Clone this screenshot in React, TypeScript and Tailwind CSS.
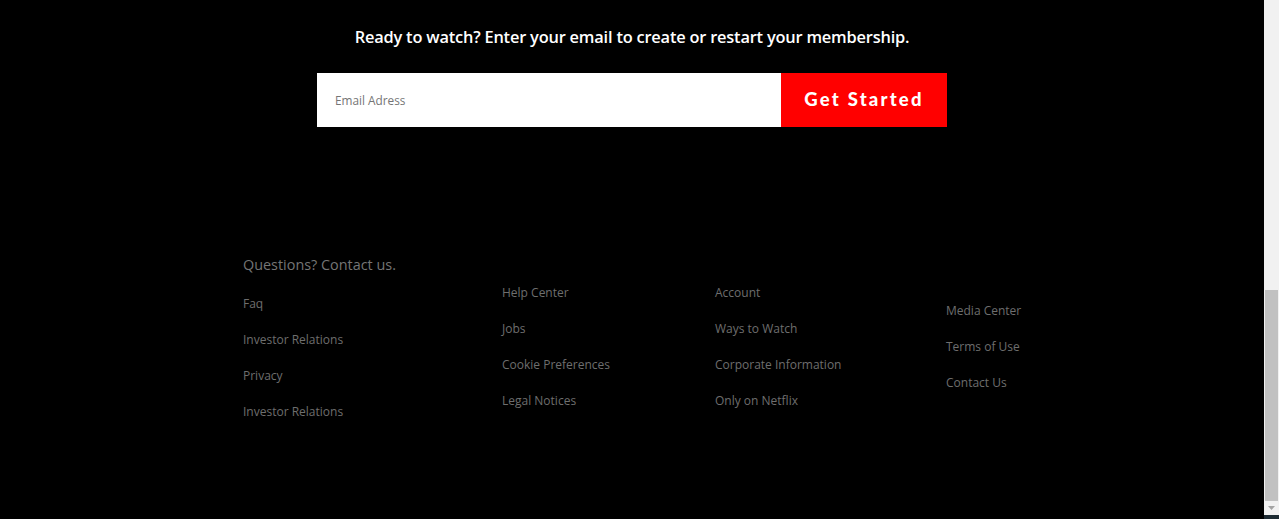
const columns = [
  { offset: "pt-[157px]", items: ["Help Center", "Jobs", "Cookie Preferences", "Legal Notices"] },
  { offset: "pt-[157px]", items: ["Account", "Ways to Watch", "Corporate Information", "Only on Netflix"] },
  { offset: "pt-[175px]", items: ["Media Center", "Terms of Use", "Contact Us"] },
];

function FooterLinks({ items }: { items: string[] }) {
  return (
    <ul className="flex flex-col gap-[18px]">
      {items.map((item, i) => (
        <li key={item + i} className="text-[12px] leading-[18px] text-[#6e6e6e]">
          <a href="#">{item}</a>
        </li>
      ))}
    </ul>
  );
}

function Scrollbar() {
  return (
    <div className="flex w-[15px] shrink-0 flex-col bg-[#f1f1f1]">
      <div className="h-[290px]" />
      <div className="mx-auto h-[211px] w-[13px] bg-[#c1c1c1]" />
      <div className="flex h-[14px] items-center justify-center">
        <svg width="7" height="4" viewBox="0 0 7 4">
          <path d="M0 0h7L3.5 4z" fill="#a3a3a3" />
        </svg>
      </div>
      <div className="h-[4px] bg-[#1d2b33]" />
    </div>
  );
}

export default function App() {
  return (
    <div className="flex h-[519px] w-full overflow-hidden bg-black font-['Open_Sans',sans-serif]">
      <main className="flex-1">
        <section className="flex flex-col items-center pt-[25px]">
          <h3 className="text-[16.4px] font-semibold leading-[24px] tracking-[-0.2px] text-white">
            Ready to watch? Enter your email to create or restart your membership.
          </h3>
          <form className="mt-[24px] flex h-[54px] w-[630px]" onSubmit={(e) => e.preventDefault()}>
            <input
              type="email"
              placeholder="Email Adress"
              className="h-full flex-1 bg-white px-[18px] text-[11.8px] text-black outline-none placeholder:text-[#757575]"
            />
            <button
              type="submit"
              className="h-full w-[166px] bg-[#ff0000] font-['Lato',sans-serif] text-[18.5px] font-black tracking-[2.2px] text-white"
            >
              Get Started
            </button>
          </form>
        </section>

        <footer className="grid grid-cols-[259px_213px_231px_auto] pl-[243px]">
          <div className="pt-[128px]">
            <p className="text-[14.4px] leading-[20px] text-[#757575]">Questions? Contact us.</p>
            <div className="mt-[20px]">
              <FooterLinks items={["Faq", "Investor Relations", "Privacy", "Investor Relations"]} />
            </div>
          </div>
          {columns.map((col) => (
            <div key={col.items[0]} className={col.offset}>
              <FooterLinks items={col.items} />
            </div>
          ))}
        </footer>
      </main>
      <Scrollbar />
    </div>
  );
}
